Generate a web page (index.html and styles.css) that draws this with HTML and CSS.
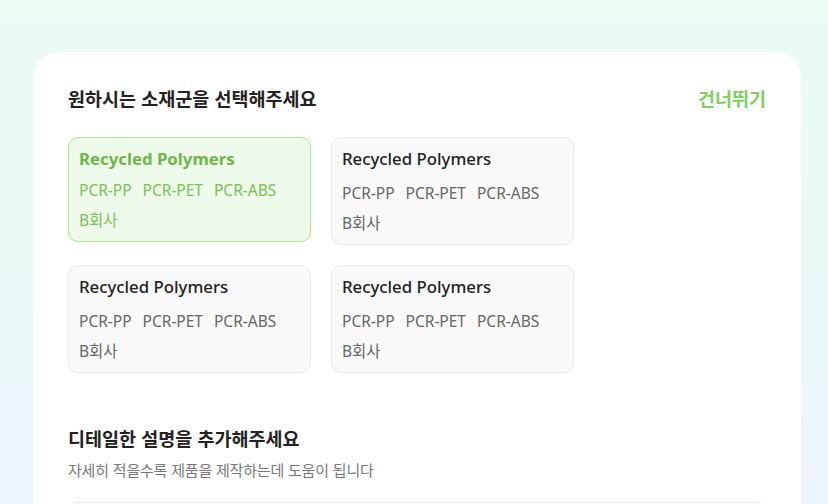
FILE: index.html
```html
<!DOCTYPE html>
<html lang="ko">
<head>
<meta charset="utf-8">
<link rel="stylesheet" href="styles.css">
</head>
<body>
<div class="page">
  <main class="panel">
    <div class="head">
      <h2 class="title">원하시는 소재군을 선택해주세요</h2>
      <a class="skip">건너뛰기</a>
    </div>
    <div class="grid">
      <div class="opt selected">
        <div class="opt-name">Recycled Polymers</div>
        <div class="tags"><span>PCR-PP</span><span>PCR-PET</span><span>PCR-ABS</span></div>
        <div class="maker">B회사</div>
      </div>
      <div class="opt">
        <div class="opt-name">Recycled Polymers</div>
        <div class="tags"><span>PCR-PP</span><span>PCR-PET</span><span>PCR-ABS</span></div>
        <div class="maker">B회사</div>
      </div>
      <div class="opt">
        <div class="opt-name">Recycled Polymers</div>
        <div class="tags"><span>PCR-PP</span><span>PCR-PET</span><span>PCR-ABS</span></div>
        <div class="maker">B회사</div>
      </div>
      <div class="opt">
        <div class="opt-name">Recycled Polymers</div>
        <div class="tags"><span>PCR-PP</span><span>PCR-PET</span><span>PCR-ABS</span></div>
        <div class="maker">B회사</div>
      </div>
    </div>
    <h2 class="title second">디테일한 설명을 추가해주세요</h2>
    <p class="sub">자세히 적을수록 제품을 제작하는데 도움이 됩니다</p>
    <div class="input"></div>
  </main>
</div>
</body>
</html>
```

FILE: styles.css
```css
* { box-sizing: border-box; }
html, body {
  margin: 0;
  height: 504px;
  overflow: hidden;
}
body {
  font-family: "Noto Sans", "Noto Sans CJK KR", sans-serif;
  background: linear-gradient(180deg, #ebfcf3 0%, #eaf8f7 60%, #ebf5fc 100%);
}
.page {
  padding: 52px 27px 0 33px;
}
.panel {
  background: #ffffff;
  border-radius: 26px 26px 0 0;
  padding: 30px 35px 0 35px;
  height: 600px;
}
.head {
  display: flex;
  justify-content: space-between;
  align-items: center;
  height: 32px;
}
.title {
  margin: 0;
  font-family: "Noto Sans CJK KR", sans-serif;
  font-size: 18.5px;
  font-weight: 700;
  letter-spacing: 0;
  color: #222222;
  line-height: 32px;
}
.skip {
  font-family: "Noto Sans CJK KR", sans-serif;
  font-size: 18.5px;
  font-weight: 700;
  color: #80cf5f;
}
.grid {
  display: grid;
  grid-template-columns: 243px 243px;
  align-items: start;
  gap: 20px;
  margin-top: 23px;
}
.opt {
  height: 108px;
  border: 1px solid #e9e9e9;
  background: #f9f9f9;
  border-radius: 10px;
  padding: 8px 10px 0 10px;
  color: #666666;
}
.opt-name {
  font-size: 16.8px;
  font-weight: 500;
  color: #222222;
  line-height: 26px;
}
.tags {
  display: flex;
  gap: 11px;
  font-size: 15.5px;
  line-height: 20px;
  margin-top: 11px;
}
.maker {
  font-family: "Noto Sans", "Noto Sans CJK KR", sans-serif;
  font-size: 15.5px;
  line-height: 20px;
  margin-top: 10px;
}
.opt.selected {
  background: #effbea;
  border-color: #aee391;
  color: #77c257;
  height: 105px;
}
.opt.selected .opt-name {
  color: #6cb847;
  font-weight: 700;
}
.opt.selected .tags {
  margin-top: 8px;
}
.second {
  margin-top: 49px;
}
.sub {
  margin: 0;
  margin-top: 4px;
  font-family: "Noto Sans CJK KR", sans-serif;
  font-size: 15px;
  letter-spacing: -0.2px;
  color: #777777;
  line-height: 24px;
}
.input {
  margin-top: 20px;
  height: 120px;
  border: 1px solid #e6e6e6;
  border-radius: 10px;
  background: #ffffff;
}
```
